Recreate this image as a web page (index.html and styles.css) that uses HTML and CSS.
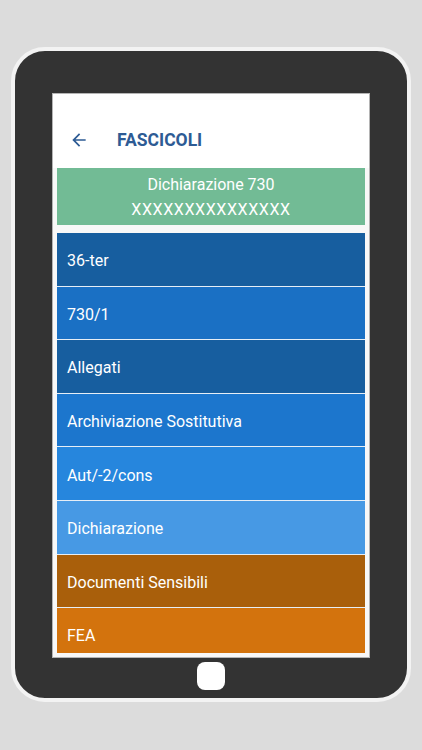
FILE: index.html
```html
<!DOCTYPE html>
<html lang="it">
<head>
<meta charset="utf-8">
<title>Fascicoli</title>
<link rel="stylesheet" href="styles.css">
</head>
<body>
<div class="tablet">
  <div class="screen">
    <div class="appbar">
      <svg class="back" viewBox="0 0 24 24" width="20" height="20"><path d="M20 11H7.83l5.59-5.59L12 4l-8 8 8 8 1.41-1.41L7.83 13H20v-2z" fill="#2d5b94"/></svg>
      <span class="title">FASCICOLI</span>
    </div>
    <div class="content">
      <div class="summary">
        <div>Dichiarazione 730</div>
        <div class="code">XXXXXXXXXXXXXXX</div>
      </div>
      <div class="list">
        <div class="item c1">36-ter</div>
        <div class="item c2">730/1</div>
        <div class="item c1">Allegati</div>
        <div class="item c3">Archiviazione Sostitutiva</div>
        <div class="item c4">Aut/-2/cons</div>
        <div class="item c5">Dichiarazione</div>
        <div class="item c6">Documenti Sensibili</div>
        <div class="item c7">FEA</div>
      </div>
    </div>
  </div>
  <div class="home"></div>
</div>
</body>
</html>
```
FILE: styles.css
```css
html, body {
  margin: 0;
  padding: 0;
}
body {
  width: 422px;
  height: 750px;
  background: #dcdcdc;
  font-family: Roboto, "Liberation Sans", sans-serif;
  overflow: hidden;
}
.tablet {
  box-sizing: border-box;
  margin: 47px 0 0 11px;
  width: 400px;
  height: 655px;
  border: 4px solid #f3f3f3;
  border-radius: 34px;
  background: #333333;
  padding-top: 43px;
  display: flex;
  flex-direction: column;
  align-items: center;
}
.screen {
  width: 316px;
  height: 563px;
  background: #ffffff;
  outline: 1px solid #b4b4b4;
  display: flex;
  flex-direction: column;
  overflow: hidden;
}
.appbar {
  height: 56px;
  margin-top: 18px;
  display: flex;
  align-items: center;
  flex: none;
}
.back {
  margin-left: 16px;
  display: block;
}
.title {
  margin-left: 28px;
  font-size: 17.5px;
  font-weight: bold;
  color: #2d5b94;
}
.content {
  flex: 1;
  background: #f8f8f8;
  padding: 0 4px 4px 4px;
  display: flex;
  flex-direction: column;
  min-height: 0;
}
.summary {
  height: 57px;
  box-sizing: border-box;
  background: #72bb95;
  color: #ffffff;
  text-align: center;
  font-size: 16px;
  line-height: 25px;
  padding-top: 4px;
  flex: none;
}
.code {
  letter-spacing: 0.6px;
}
.list {
  margin-top: 8px;
  flex: 1;
  min-height: 0;
  overflow: hidden;
  display: flex;
  flex-direction: column;
  gap: 1px;
  background: #e6eef6;
}
.item {
  flex: none;
  box-sizing: border-box;
  height: 52.6px;
  display: flex;
  align-items: center;
  padding: 3px 0 0 10px;
  color: #ffffff;
  font-size: 16px;
}
.c1 { background: #175e9f; }
.c2 { background: #1a70c4; }
.c3 { background: #1c76cd; }
.c4 { background: #2686dd; }
.c5 { background: #4799e4; }
.c6 { background: #a95f0b; }
.c7 { background: #d3730d; }
.home {
  margin-top: 5px;
  width: 28px;
  height: 28px;
  border-radius: 8px;
  background: #ffffff;
}
```
